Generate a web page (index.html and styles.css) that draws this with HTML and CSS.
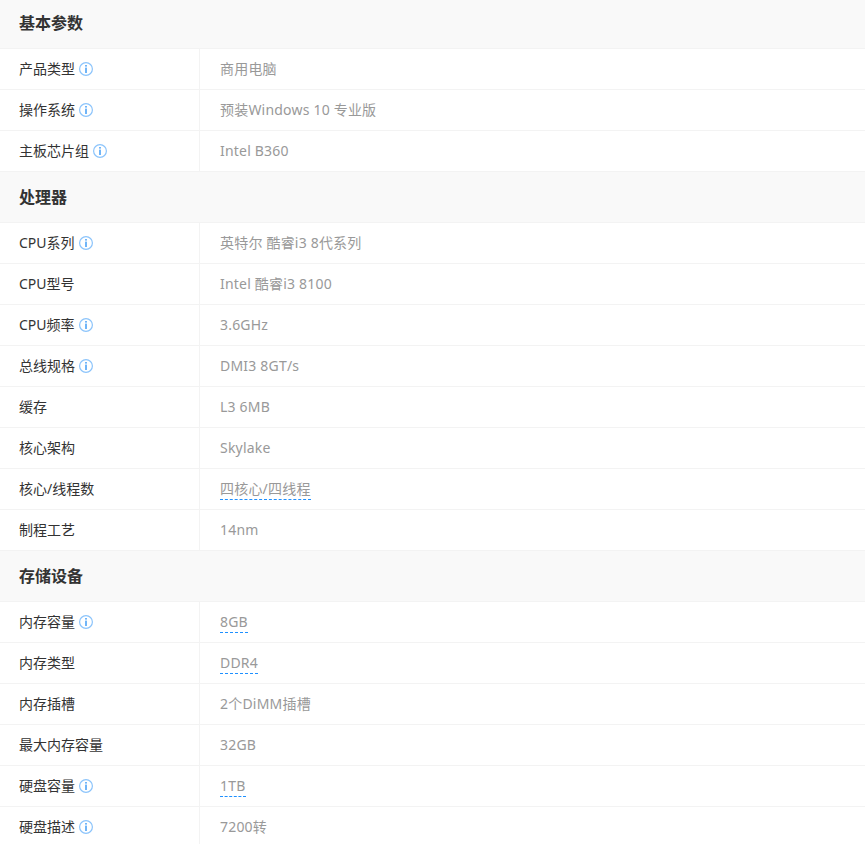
FILE: index.html
```html
<!DOCTYPE html>
<html lang="zh">
<head>
<meta charset="utf-8">
<title>参数</title>
<link rel="stylesheet" href="styles.css">
</head>
<body>
<svg class="defs" width="0" height="0"><symbol id="info" viewBox="0 0 14 14"><circle cx="7" cy="7" r="6.4" fill="none" stroke="#8cc4fb" stroke-width="1.2"/><rect x="6.2" y="3" width="1.6" height="1.6" fill="#4ea3f7"/><rect x="6.2" y="5.6" width="1.6" height="5.4" fill="#4ea3f7"/></symbol></svg>
<main class="spec">
<h2 class="head">基本参数</h2>
<div class="row"><div class="key">产品类型<svg class="i"><use href="#info"/></svg></div><div class="val">商用电脑</div></div>
<div class="row"><div class="key">操作系统<svg class="i"><use href="#info"/></svg></div><div class="val">预装Windows 10 专业版</div></div>
<div class="row"><div class="key">主板芯片组<svg class="i"><use href="#info"/></svg></div><div class="val">Intel B360</div></div>
<h2 class="head">处理器</h2>
<div class="row"><div class="key">CPU系列<svg class="i"><use href="#info"/></svg></div><div class="val">英特尔 酷睿i3 8代系列</div></div>
<div class="row"><div class="key">CPU型号</div><div class="val">Intel 酷睿i3 8100</div></div>
<div class="row"><div class="key">CPU频率<svg class="i"><use href="#info"/></svg></div><div class="val">3.6GHz</div></div>
<div class="row"><div class="key">总线规格<svg class="i"><use href="#info"/></svg></div><div class="val">DMI3 8GT/s</div></div>
<div class="row"><div class="key">缓存</div><div class="val">L3 6MB</div></div>
<div class="row"><div class="key">核心架构</div><div class="val">Skylake</div></div>
<div class="row"><div class="key">核心/线程数</div><div class="val"><span class="link">四核心/四线程</span></div></div>
<div class="row"><div class="key">制程工艺</div><div class="val">14nm</div></div>
<h2 class="head">存储设备</h2>
<div class="row"><div class="key">内存容量<svg class="i"><use href="#info"/></svg></div><div class="val"><span class="link">8GB</span></div></div>
<div class="row"><div class="key">内存类型</div><div class="val"><span class="link">DDR4</span></div></div>
<div class="row"><div class="key">内存插槽</div><div class="val">2个DiMM插槽</div></div>
<div class="row"><div class="key">最大内存容量</div><div class="val">32GB</div></div>
<div class="row"><div class="key">硬盘容量<svg class="i"><use href="#info"/></svg></div><div class="val"><span class="link">1TB</span></div></div>
<div class="row"><div class="key">硬盘描述<svg class="i"><use href="#info"/></svg></div><div class="val">7200转</div></div>
</main>
</body>
</html>
```
FILE: styles.css
```css
html, body { margin: 0; padding: 0; background: #fff; height: 844px; overflow: hidden; }
.defs { position: absolute; }
.spec { margin-top: -2px; font-family: "Noto Sans", "Noto Sans CJK SC", sans-serif; font-size: 14px; }
.head {
  margin: 0; height: 50px; line-height: 50px; padding-left: 19px;
  font-size: 16px; font-weight: 700; color: #333;
  background: #f9f9f9; border-bottom: 1px solid #f3f3f3;
}
.row { display: flex; height: 40px; border-bottom: 1px solid #f3f3f3; line-height: 40px; }
.key { width: 180px; padding-left: 19px; color: #333; border-right: 1px solid #f3f3f3; display: flex; align-items: center; }
.val { padding-left: 20px; color: #999; letter-spacing: 0.2px; }
.i { width: 14px; height: 14px; margin-left: 4px; }
.link { display: inline-block; height: 21px; line-height: 21px; border-bottom: 1px dashed #1e90ff; }
```
